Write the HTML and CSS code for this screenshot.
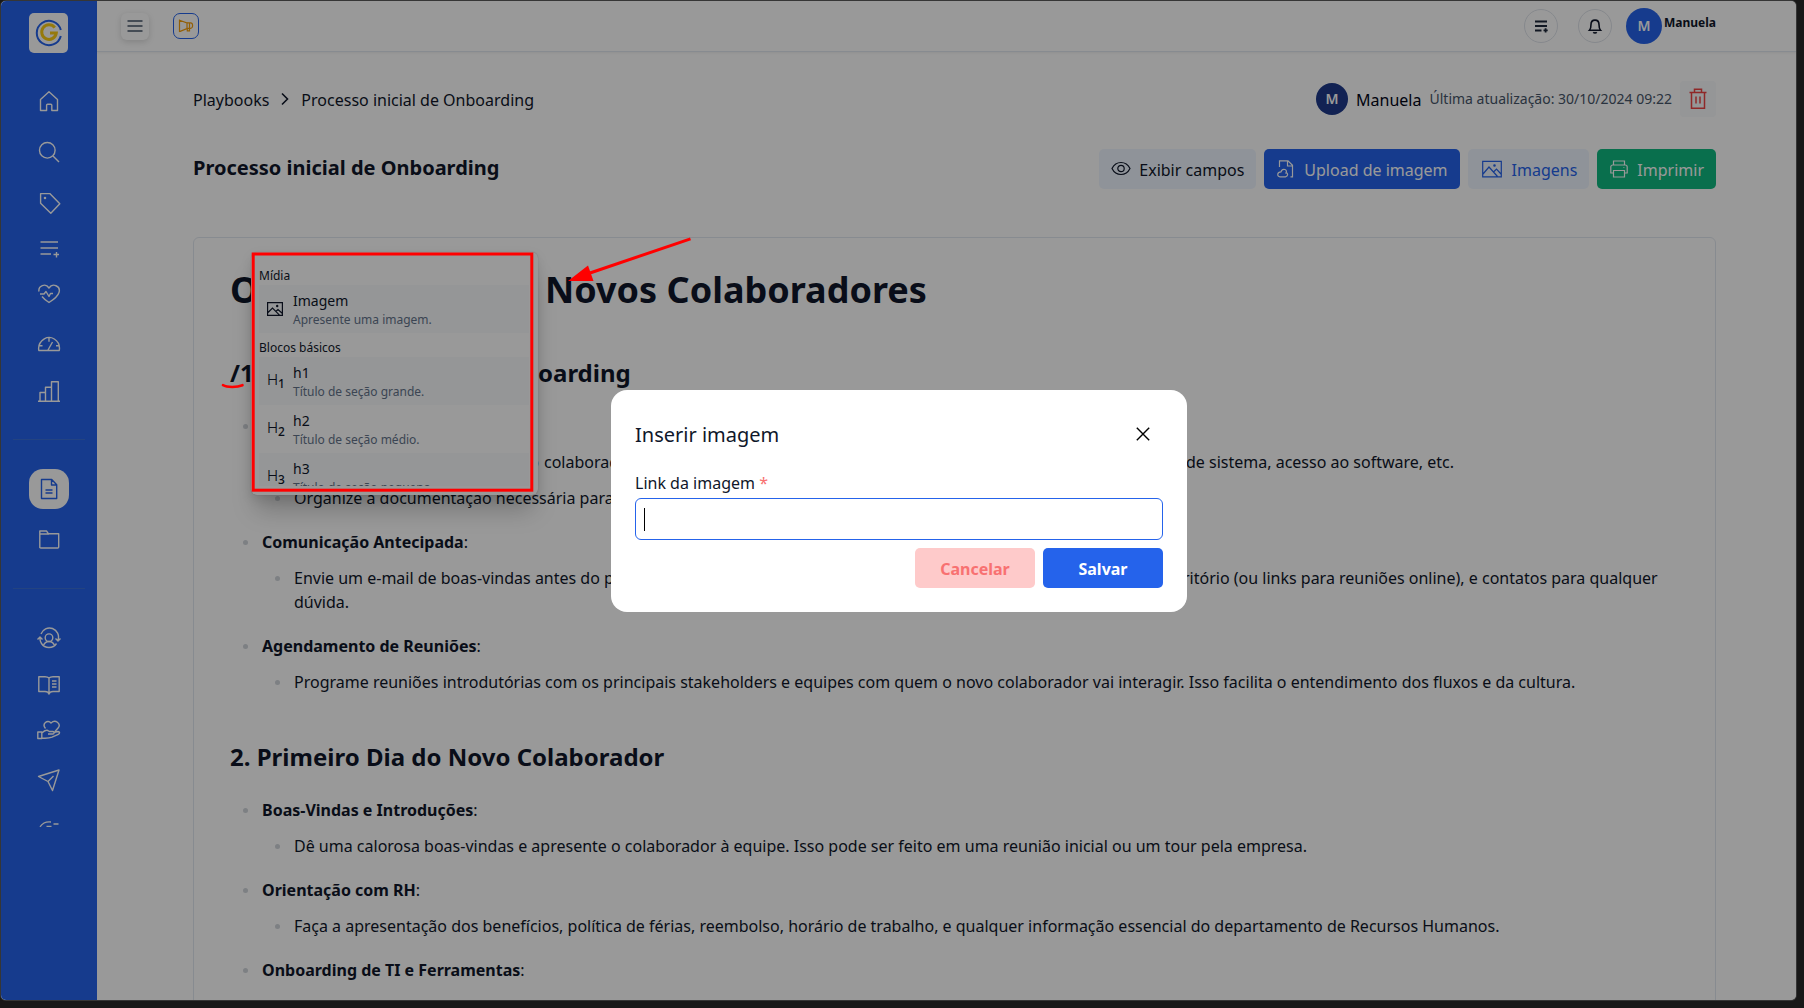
FILE: index.html
```html
<!DOCTYPE html>
<html lang="pt-BR">
<head>
<meta charset="utf-8">
<title>Playbooks - Processo inicial de Onboarding</title>
<link rel="stylesheet" href="styles.css">
</head>
<body>
<div class="window">
  <aside class="sidebar">
    <div class="logo">
      <svg width="28" height="28" viewBox="0 0 28 28" fill="none"><path d="M25.8 11A12.2 12.2 0 1 0 25.8 17" stroke="#2563eb" stroke-width="2"/><path d="M19.8 8.6A7.3 7.3 0 1 0 21.3 14H15" stroke="#facc15" stroke-width="3"/></svg>
    </div>
    <nav class="nav">
      <svg class="ic i-home" width="24" height="24" viewBox="0 0 24 24"><path d="M3.5 21.500V10.500L12 2.800l8.500 7.700v11h-5.700v-5.200a1 1 0 0 0-1-1h-3.200a1 1 0 0 0-1 1v5.200z"/></svg>
      <svg class="ic i-search" width="24" height="24" viewBox="0 0 24 24"><circle cx="10.300" cy="10.300" r="7.800"/><path d="M16 16l6 6"/></svg>
      <svg class="ic i-tag" width="24" height="24" viewBox="0 0 24 24"><path d="M3.600 2.600h9.200l10 10.200-9 9.400L3.600 12.300z"/><circle cx="8" cy="7" r=".6"/></svg>
      <svg class="ic i-list" width="24" height="24" viewBox="0 0 24 24"><path d="M3.500 5h17.500M3.500 11h17.500M3.500 17H14M16.500 17.500h5.500M19.500 15v5.500"/></svg>
      <svg class="ic i-heart" width="24" height="24" viewBox="0 0 24 24"><path d="M2 9.500C1 4 8.500.5 12 6c3.500-5.500 12-2 10 4.500-1 3.500-6 7.500-10 10-2.500-1.500-5-3.500-7-6M3 12h4l2-2.500 3 5 1.500-3h2.500"/></svg>
      <svg class="ic i-gauge" width="24" height="24" viewBox="0 0 24 24"><path d="M1.800 18.500c-.8-5 2-9.500 5.500-11.700a9.800 9.800 0 0 1 10 .2c3.500 2.200 5.800 6.500 5 11.500zM12 5.800v4M2 13.800h3.500M19 13.800h3.300M11 18l4.500-8"/></svg>
      <svg class="ic i-chart" width="24" height="24" viewBox="0 0 24 24"><path d="M1 22.300h22M3 22v-8.500h5.500V22M8.500 14V8.300h6V22M14.500 9V2.800h6.800V22"/></svg>
      <hr class="rule">
      <span class="active"><svg class="ic ic-on" width="24" height="24" viewBox="0 0 24 24"><path d="M4.500 2.500h10.200l5 5.200v13.800H4.500zM14.500 2.500V8h5M8.500 13h7M8.500 16h7"/></svg></span>
      <svg class="ic i-folder" width="24" height="24" viewBox="0 0 24 24"><path d="M2.800 20V3h6.700l2 2.800h10.200V19a1 1 0 0 1-1 1H3.800a1 1 0 0 1-1-1M3 6h9"/></svg>
      <hr class="rule rule-2">
      <svg class="ic i-sync" width="24" height="24" viewBox="0 0 24 24"><circle cx="12" cy="10.700" r="3.800"/><path d="M6.300 19c1-3 3-4.500 5.700-4.500s4.700 1.500 5.700 4.500M4 7A9 9 0 0 1 21 13M18.500 11.500l2.500 2.500 2.500-2.500M19.500 16.500a9 9 0 0 1-15 0A9 9 0 0 1 3 10.500M.5 12.500L3 10l2.500 2.500"/></svg>
      <svg class="ic i-book" width="24" height="24" viewBox="0 0 24 24"><path d="M12 5c-1-1-2.500-1.300-4-1.300H1.800v14.800H8c2 0 3.500.4 4 2.500.5-2.100 2-2.500 4-2.500h6.200V3.700H16c-1.500 0-3 .3-4 1.300zM12 5v15M15 8h4.500M15 11h4.500M15 14h4.500"/></svg>
      <svg class="ic i-care" width="24" height="24" viewBox="0 0 24 24"><path d="M8.500 10.500C4.500 6 10.500 1 14 5c4.500-4 10 .5 7.500 4.500L18 13.500M.8 14h4v6.500h-4zM4.800 15c2-2 4-3.500 6-2.500l1.500 1h3.500c2 .2 1.500 2.500 0 2.500H11M16.500 14.500l4.500-1c2 0 2 2 .3 2.800L15 19.200c-3.500 1.500-7 1-10.200 1"/></svg>
      <svg class="ic i-send" width="24" height="24" viewBox="0 0 24 24"><path d="M1.500 8.500L22 2l-6.500 20.500-4.500-9zM11 13.500l5.500-5.500M1.500 8.500l9.500 5"/></svg>
      <svg class="ic i-cut" width="24" height="7" viewBox="0 0 24 7"><path d="M3 6.800C6 2.500 10 1.500 14 2M9.500 6.500h5M16.500 4h5"/></svg>
    </nav>
  </aside>

  <div class="main">
    <header class="topbar">
      <span class="burger"><svg width="16" height="14" viewBox="0 0 16 14"><path d="M.5 2h15M.5 7h15M.5 12h15"/></svg></span>
      <span class="mega"><svg width="16" height="16" viewBox="0 0 16 16"><path d="M1.500 1.500v12.500M1.500 2.200l7.500 2.800v5.600l-7.500 3M9 4.800h3.500c2.800 0 2.800 5.600 0 5.600H9M9.300 10.500v2.300h2.200V4.800"/></svg></span>
      <span class="grow"></span>
      <span class="round"><svg width="16" height="16" viewBox="0 0 16 16"><path d="M2 3.500h12M2 8h12M2 12.500h6.500M10.500 12.300h4.200M12.600 10.200v4.200" stroke="#1e293b" stroke-width="1.800"/></svg></span>
      <span class="round round-2"><svg width="16" height="18" viewBox="0 0 16 18"><path d="M2.500 13.300c1.300-1.500 1.500-2.500 1.500-5.800 0-5.800 8-5.800 8 0 0 3.300.2 4.300 1.500 5.800zM6.300 15.300c.8 1 2.600 1 3.400 0" stroke="#0f172a" stroke-width="1.600"/></svg></span>
      <span class="avatar">M</span>
      <b class="user">Manuela</b>
    </header>

    <section class="page">
      <div class="crumbs">
        <span class="drop">Playbooks</span>
        <svg class="chev" width="8" height="14" viewBox="0 0 8 14"><path d="M1 1.500l5.500 5.500L1 12.500"/></svg>
        <span class="drop">Processo inicial de Onboarding</span>
        <span class="grow"></span>
        <span class="avatar avatar-s">M</span>
        <span class="author drop">Manuela</span>
        <span class="updated">Última atualização: 30/10/2024 09:22</span>
        <span class="trash"><svg width="20" height="24" viewBox="0 0 20 24"><path d="M1.500 5.500h17M3.500 5.500v15.800h13V5.500M6.500 5V2.300h7V5M8 9.500v7M12 9.500v7"/></svg></span>
      </div>
      <div class="heading">
        <h2>Processo inicial de Onboarding</h2>
        <span class="grow"></span>
        <span class="btn b-show"><svg width="20" height="20" viewBox="0 0 20 20"><path d="M1 9.500c4-8 14-8 18 0-4 8-14 8-18 0z"/><circle cx="10" cy="9.500" r="3.200"/></svg>Exibir campos</span>
        <span class="btn b-up"><svg width="20" height="20" viewBox="0 0 20 20"><path d="M3.500 8V1.800h8.500l4.500 4.500v11.500h-2M11.500 2v5h5M4 17.800h5.500c3-.5 2.500-4 .5-4 2-3-3.500-5.500-5-1-3.800 0-4.500 4.700-1 5z"/></svg>Upload de imagem</span>
        <span class="btn b-img"><svg width="20" height="20" viewBox="0 0 20 20"><path d="M.7 2.300h18.600v15.600H.7zM1 15l6-7 8.500 9.500M11.500 13l3-3 4.500 5"/><circle cx="12.500" cy="6.500" r=".7"/></svg>Imagens</span>
        <span class="btn b-print"><svg width="20" height="20" viewBox="0 0 20 20"><path d="M4.500 6V2h11v4M4.500 14h-2.700V8c0-1.200.8-2 2-2h12.400c1.200 0 2 .8 2 2v6h-2.700M4.500 11.500h11V18h-11zM14.500 8.500h.8"/></svg>Imprimir</span>
      </div>

      <article class="doc">
        <h1><span class="gap g-h1">Onboarding de</span>Novos Colaboradores</h1>
        <h3><span class="gap g-h2">/1. Preparação Pré-Onb</span>oarding</h3>
        <ul>
          <li><b>Preparação do Ambiente</b>:
            <ul>
              <li><span class="gap g-a">Configure o acesso do novo</span><span class="gap g-b">colaborador, incluindo computador, e-mail corporativo, credenciais</span>de sistema, acesso ao software, etc.</li>
              <li>Organize a documentação necessária para assinatura.</li>
            </ul>
          </li>
          <li><b>Comunicação Antecipada</b>:
            <ul>
              <li><span class="gap g-c">Envie um e-mail de boas-vindas antes do primeiro dia, com horário e endereço do esc</span>ritório (ou links para reuniões online), e contatos para qualquer dúvida.</li>
            </ul>
          </li>
          <li><b>Agendamento de Reuniões</b>:
            <ul>
              <li>Programe reuniões introdutórias com os principais stakeholders e equipes com quem o novo colaborador vai interagir. Isso facilita o entendimento dos fluxos e da cultura.</li>
            </ul>
          </li>
        </ul>
        <h3>2. Primeiro Dia do Novo Colaborador</h3>
        <ul>
          <li><b>Boas-Vindas e Introduções</b>:
            <ul>
              <li>Dê uma calorosa boas-vindas e apresente o colaborador à equipe. Isso pode ser feito em uma reunião inicial ou um tour pela empresa.</li>
            </ul>
          </li>
          <li><b>Orientação com RH</b>:
            <ul>
              <li>Faça a apresentação dos benefícios, política de férias, reembolso, horário de trabalho, e qualquer informação essencial do departamento de Recursos Humanos.</li>
            </ul>
          </li>
          <li><b>Onboarding de TI e Ferramentas</b>:</li>
        </ul>
      </article>
    </section>
  </div>

  <div class="menu">
    <div class="menu-list">
      <p class="group">Mídia</p>
      <div class="item tint"><svg width="16" height="16" viewBox="0 0 16 16"><path d="M.6 1.600h14.800v12.800H.6zM1 11.500l4.500-4.500 7 7.200M9 10.300l2-1.800 4.200 3.800"/><circle cx="10.200" cy="5" r=".6"/></svg><p>Imagem<small>Apresente uma imagem.</small></p></div>
      <p class="group">Blocos básicos</p>
      <div class="item tint"><span class="hx">H<sub>1</sub></span><p>h1<small>Título de seção grande.</small></p></div>
      <div class="item"><span class="hx">H<sub>2</sub></span><p>h2<small>Título de seção médio.</small></p></div>
      <div class="item tint"><span class="hx">H<sub>3</sub></span><p>h3<small>Título de seção pequena.</small></p></div>
    </div>
  </div>

  <div class="overlay"></div>

  <div class="modal">
    <div class="modal-head"><span class="drop">Inserir imagem</span><svg width="14" height="14" viewBox="0 0 14 14"><path d="M.8.800l12.400 12.400M13.200.800L.8 13.200"/></svg></div>
    <label>Link da imagem <i>*</i></label>
    <div class="input"><span class="caret"></span></div>
    <div class="actions"><span class="cancel">Cancelar</span><span class="save">Salvar</span></div>
  </div>
</div>

<svg class="marks" width="1804" height="1008" viewBox="0 0 1804 1008">
  <rect x="253.200" y="254" width="278.600" height="236.200" fill="none" stroke="#f00" stroke-width="3"/>
  <path d="M690.500 238.800L590 273" stroke="#f00" stroke-width="3"/>
  <path d="M568 281L588 265.500L593.500 281z" fill="#f00"/>
  <path d="M223 385.200c4 2.300 14 2.300 19.500 0" fill="none" stroke="#f00" stroke-width="2.600" stroke-linecap="round"/>
</svg>
</body>
</html>
```
FILE: styles.css
```css
* { box-sizing: border-box; }
body {
  margin: 0;
  height: 1008px;
  overflow: hidden;
  padding: 1px 8px 8px 1px;
  background: #181818;
  font: 16px/24px "Noto Sans", sans-serif;
  color: #0f172a;
}
p, h1, h2, h3, ul { margin: 0; padding: 0; }
svg { display: block; flex: none; fill: none; }
.window {
  position: relative;
  display: flex;
  width: 1795px;
  height: 999px;
  border-radius: 5px;
  overflow: hidden;
  background: #fff;
  box-shadow: 0 0 0 1px #363636;
}
.overlay { position: absolute; inset: 0; background: rgba(0, 0, 0, .4); }
.drop { padding-top: 2px; }

/* sidebar */
.sidebar { width: 96px; background: #2563eb; padding-top: 12px; flex: none; }
.logo {
  width: 39px; height: 40px; margin: 0 0 0 28px; border-radius: 5px; background: #fff;
  display: flex; align-items: center; justify-content: center;
}
.nav { display: flex; flex-direction: column; align-items: center; }
.ic { stroke: #fff; stroke-width: 1.4; stroke-linejoin: round; }
.i-home { margin-top: 36px; }
.i-search { margin-top: 27px; }
.i-tag { margin-top: 27px; }
.i-list { margin-top: 22px; }
.i-heart { margin-top: 21px; }
.i-gauge { margin-top: 26px; }
.i-chart { margin-top: 23px; }
.rule { width: 72px; height: 1px; border: 0; margin: 36px 0 0; background: #3b70d8; }
.active {
  width: 40px; height: 40px; margin-top: 29px; border-radius: 14px; background: #fff;
  display: flex; align-items: center; justify-content: center;
}
.ic-on { stroke: #2563eb; }
.i-folder { margin-top: 19px; }
.rule-2 { margin-top: 36px; }
.i-sync { margin-top: 38px; }
.i-book { margin-top: 22px; }
.i-care { margin-top: 21px; }
.i-send { margin-top: 26px; }
.i-cut { margin-top: 28px; }

/* top bar */
.main { flex: 1; min-width: 0; }
.grow { flex: 1; }
.topbar {
  height: 51px; padding: 0 80px 7px 24px; display: flex; align-items: center;
  border-bottom: 1px solid #e2e8f0; box-shadow: 0 1px 2px rgba(0, 0, 0, .06);
}
.burger {
  width: 28px; height: 27px; border-radius: 6px; margin-top: 7px;
  display: flex; align-items: center; justify-content: center;
  box-shadow: 0 2px 6px rgba(0, 0, 0, .15);
}
.burger svg { stroke: #475569; stroke-width: 1.6; }
.mega {
  width: 26px; height: 26px; margin: 7px 0 0 24px; border: 1px solid #2563eb; border-radius: 7px;
  display: flex; align-items: center; justify-content: center;
}
.mega svg { stroke: #f59e0b; stroke-width: 1.2; }
.round {
  width: 34px; height: 34px; border: 1px solid #dfe3ea; border-radius: 50%; margin-top: 7px;
  display: flex; align-items: center; justify-content: center;
}
.round-2 { margin-left: 20px; margin-right: 14px; }
.avatar {
  width: 36px; height: 36px; margin-top: 7px; border-radius: 50%; background: #2563eb; color: #fff;
  font-weight: 600; font-size: 14px; display: flex; align-items: center; justify-content: center;
}
.user { width: 52px; font-size: 12px; font-weight: 700; line-height: 20px; margin: 0 0 0 2px; white-space: nowrap; }

/* page */
.page { padding: 29px 80px 0 96px; }
.crumbs { display: flex; align-items: center; height: 36px; }
.chev { margin: 0 12px 0; stroke: #0f172a; stroke-width: 1.6; }
.avatar-s { width: 32px; height: 32px; margin: 0 8px 0 0; background: #1e3a8a; }
.author { margin-right: 8px; color: #020617; }
.updated { font-size: 14px; color: #475569; margin-right: 8px; }
.trash {
  width: 36px; height: 36px; border-radius: 4px; background: #f8fafc;
  display: flex; align-items: center; justify-content: center;
}
.trash svg { stroke: #ef4444; stroke-width: 1.5; }
.heading { display: flex; gap: 8px; margin-top: 32px; height: 40px; }
h2 { font-size: 20px; line-height: 28px; margin-top: 5px; font-weight: 700; }
.btn { height: 40px; display: flex; align-items: center; border-radius: 5px; padding: 2px 12px 0; white-space: nowrap; }
.btn svg { stroke: currentColor; stroke-width: 1.2; margin: -2px 8px 0 0; }
.b-show, .b-img { background: #eff6ff; }
.b-up { background: #2563eb; color: #fff; }
.b-img { color: #2563eb; padding-left: 14px; }
.b-img svg { margin-right: 10px; }
.b-print { background: #10b981; color: #fff; }

/* document */
.doc {
  margin-top: 48px; height: 900px; border: 1px solid #e2e8f0; border-radius: 6px;
  padding: 32px 36px; overflow: hidden;
}
.doc h1 { font-size: 36px; line-height: 40px; font-weight: 700; white-space: nowrap; }
.doc h3 { font-size: 24px; line-height: 32px; margin: 47px 0 25px; font-weight: 700; white-space: nowrap; }
.doc ul { list-style: none; }
.doc li { position: relative; padding-left: 32px; }
.doc > ul > li { margin-top: 20px; }
.doc > ul > li:first-child { margin-top: 0; }
.doc li li { margin-top: 12px; }
.doc li::before {
  content: ""; position: absolute; left: 13px; top: 10px;
  width: 5px; height: 5px; border-radius: 50%; background: #d1d5db;
}
.doc b { font-weight: 700; }
.gap { display: inline-block; vertical-align: top; white-space: nowrap; overflow: hidden; }
.g-h1 { width: 315px; }
.g-h2 { width: 308px; }
.g-a { width: 250px; padding-right: 5px; text-align: right; }
.g-b { width: 642px; }
.g-c { width: 889px; }

/* slash menu */
.menu {
  position: absolute; left: 250px; top: 251px; width: 287px; height: 243px;
  padding: 8px; border-radius: 6px; background: #fff;
  box-shadow: 0 0 1px rgba(15, 23, 42, .3), 0 20px 25px -5px rgba(0, 0, 0, .22), 0 4px 12px rgba(0, 0, 0, .1);
}
.menu-list { height: 226px; overflow: hidden; }
.group { font-size: 12px; line-height: 16px; padding-top: 7px; height: 24px; }
.group:first-child { padding-top: 8px; height: 25px; }
.item { height: 48px; padding-left: 8px; display: flex; align-items: center; margin-right: 1px; }
.item p { font-size: 14px; line-height: 19px; margin: 1px 0 0 10px; }
.item small { display: block; font-size: 12px; line-height: 18px; margin-top: 1px; color: #64748b; }
.item svg { stroke: #0f172a; stroke-width: 1.2; }
.tint { background: #f8fafc; }
.hx { width: 16px; font: 300 15px/16px Inter, sans-serif; white-space: nowrap; margin-top: 0; }
.hx sub { font: 500 12px/1 "Noto Sans", sans-serif; vertical-align: -3px; }

/* modal */
.modal {
  position: absolute; left: 610px; top: 389px; width: 576px; height: 222px;
  padding: 24px; border-radius: 16px; background: #fff;
}
.modal-head { display: flex; justify-content: space-between; align-items: center; height: 40px; font-size: 20px; padding-right: 13px; }
.modal-head svg { stroke: #000; stroke-width: 1.4; }
.modal label { display: block; margin-top: 17px; }
.modal i { color: #f87171; font-style: normal; }
.input { height: 42px; margin-top: 3px; border: 1px solid #2563eb; border-radius: 6px; padding: 9px 8px; }
.caret { display: block; width: 1px; height: 23px; background: #000; }
.actions { display: flex; justify-content: flex-end; gap: 8px; margin-top: 8px; font-weight: 700; }
.actions span { width: 120px; height: 40px; line-height: 42px; text-align: center; border-radius: 5px; }
.cancel { background: #fecaca; color: #f87171; }
.save { background: #2563eb; color: #fff; }

.marks { position: absolute; left: 0; top: 0; }
```
